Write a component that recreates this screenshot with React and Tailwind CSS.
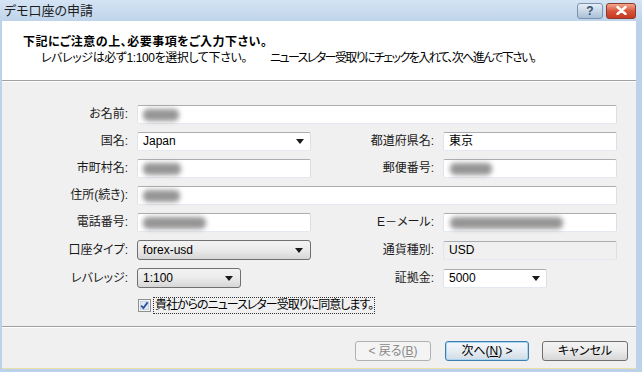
import clsx from "clsx";

const font = "font-['Liberation_Sans','Noto_Sans_CJK_JP',sans-serif] [font-feature-settings:'palt']";

function Blob({ className }) {
  return <div className={clsx("h-[12px] rounded-[5px] bg-[#8a8a8a] blur-[2.5px] opacity-90", className)} />;
}

function Arrow() {
  return (
    <svg width="8" height="5" viewBox="0 0 8 5" className="shrink-0">
      <path d="M0 0h8L4 5z" fill="#1a1a1a" />
    </svg>
  );
}

function TextBox({ className, muted, children }) {
  return (
    <div
      className={clsx(
        "h-[19px] flex items-center pl-[5px] pr-[6px] rounded-[2px] border border-[#abadb3] border-r-[#dbdfe6] border-b-[#e3e9ef] border-l-[#e2e3ea]",
        muted ? "bg-[#f0f0f0]" : "bg-white",
        className
      )}
    >
      {children}
    </div>
  );
}

function WhiteSelect({ className, value }) {
  return (
    <TextBox className={clsx("justify-between", className)}>
      <span>{value}</span>
      <Arrow />
    </TextBox>
  );
}

function GraySelect({ className, value }) {
  return (
    <div
      className={clsx(
        "h-[20px] flex items-center justify-between pl-[5px] pr-[7px] rounded-[3px] border border-[#707070]",
        "bg-gradient-to-b from-[#f3f3f3] via-[#ebebeb] to-[#d6d6d6]",
        className
      )}
    >
      <span>{value}</span>
      <Arrow />
    </div>
  );
}

function Label({ children, className }) {
  return <div className={clsx("text-right pr-[3px] text-[#1a1a1a] shrink-0", className)}>{children}</div>;
}

export default function App() {
  return (
    <div className={clsx("w-[642px] h-[372px] flex flex-col bg-[#bcd2ea] text-[12px] leading-[15px] text-black overflow-hidden", font)}>
      {/* Title bar */}
      <div className="h-[21px] flex items-center bg-gradient-to-b from-[#d5e4f4] to-[#bfd4eb] pl-[4px] pr-[6px]">
        <span className="text-[13px] text-[#1e1e1e]">デモ口座の申請</span>
        <div className="ml-auto flex items-center gap-[3px]">
          <div className="w-[26px] h-[16px] rounded-[3px] border border-[#7d93ad] bg-gradient-to-b from-[#e6eef7] via-[#c9d7e6] to-[#aabfd6] flex items-center justify-center text-[12px] font-bold text-[#34506f] leading-none">
            ?
          </div>
          <div className="w-[30px] h-[16px] rounded-[3px] border border-[#8a3a2e] bg-gradient-to-b from-[#f0a88e] via-[#d8553a] to-[#c7381f] flex items-center justify-center">
            <svg width="11" height="9" viewBox="0 0 11 9">
              <path d="M1.5 1l8 7M9.5 1l-8 7" stroke="#fff" strokeWidth="2.4" strokeLinecap="round" />
            </svg>
          </div>
        </div>
      </div>

      {/* Window body */}
      <div className="flex-1 flex flex-col ml-[2px] mr-[6px] mb-[3px] bg-[#f0f0f0] border-b border-[#e8e0a8]">
        {/* Header */}
        <div className="h-[60px] bg-white border-b border-[#a0a0a0] pl-[21px] pt-[13px]">
          <div className="font-bold text-[12px] leading-[16px] tracking-[0.5px]">下記にご注意の上、必要事項をご入力下さい。</div>
          <div className="flex pl-[18px] leading-[16px]">
            <span className="w-[229px] shrink-0 tracking-[-0.4px]">レバレッジは必ず1:100を選択して下さい。</span>
            <span className="shrink-0 tracking-[-1.6px]">ニュースレター受取りにチェックを入れて、次へ進んで下さい。</span>
          </div>
        </div>

        {/* Form */}
        <div className="flex-1 border-t border-white pt-[23px] flex flex-col gap-[8px]">
          <div className="flex items-center">
            <Label className="w-[129px]">お名前:</Label>
            <TextBox className="ml-[6px] w-[480px]">
              <Blob className="w-[36px]" />
            </TextBox>
          </div>

          <div className="flex items-center">
            <Label className="w-[129px]">国名:</Label>
            <WhiteSelect className="ml-[6px] w-[174px]" value="Japan" />
            <Label className="w-[126px]">都道府県名:</Label>
            <TextBox className="ml-[6px] w-[174px]">
              <span>東京</span>
            </TextBox>
          </div>

          <div className="flex items-center">
            <Label className="w-[129px]">市町村名:</Label>
            <TextBox className="ml-[6px] w-[174px]">
              <Blob className="w-[38px]" />
            </TextBox>
            <Label className="w-[126px]">郵便番号:</Label>
            <TextBox className="ml-[6px] w-[174px]">
              <Blob className="w-[42px] ml-[1px]" />
            </TextBox>
          </div>

          <div className="flex items-center">
            <Label className="w-[129px]">住所(続き):</Label>
            <TextBox className="ml-[6px] w-[480px]">
              <Blob className="w-[37px]" />
            </TextBox>
          </div>

          <div className="flex items-center">
            <Label className="w-[129px]">電話番号:</Label>
            <TextBox className="ml-[6px] w-[174px]">
              <Blob className="w-[63px]" />
            </TextBox>
            <Label className="w-[126px]">E－メール:</Label>
            <TextBox className="ml-[6px] w-[174px]">
              <Blob className="w-[113px] ml-[1px]" />
            </TextBox>
          </div>

          <div className="flex items-center">
            <Label className="w-[129px]">口座タイプ:</Label>
            <GraySelect className="ml-[6px] w-[174px]" value="forex-usd" />
            <Label className="w-[126px]">通貨種別:</Label>
            <TextBox muted className="ml-[6px] w-[174px]">
              <span>USD</span>
            </TextBox>
          </div>

          <div className="flex items-center">
            <Label className="w-[129px]">レバレッジ:</Label>
            <GraySelect className="ml-[6px] w-[104px]" value="1:100" />
            <Label className="w-[196px]">証拠金:</Label>
            <WhiteSelect className="ml-[6px] w-[104px]" value="5000" />
          </div>

          <div className="flex items-center pl-[136px] h-[18px]">
            <svg width="13" height="13" viewBox="0 0 13 13" className="shrink-0">
              <rect x="0.5" y="0.5" width="12" height="12" fill="#f4f4f4" stroke="#8e8f8f" />
              <rect x="2.5" y="2.5" width="8" height="8" fill="#dfe9f5" stroke="#c6d3e2" />
              <path d="M3.2 6.6l2.2 2.4 4.2-5.6" fill="none" stroke="#2e4f9c" strokeWidth="1.8" />
            </svg>
            <span className="ml-[2px] px-[1px] border border-dotted border-[#333] leading-[15px] tracking-[-1px]">
              貴社からのニュースレター受取りに同意します。
            </span>
          </div>
        </div>

        {/* Footer */}
        <div className="h-[42px] border-t border-[#a0a0a0] flex flex-col">
          <div className="flex-1 border-t border-white flex items-start justify-end pt-[13px] pr-[8px] gap-[14px]">
            <div className="h-[20px] w-[76px] rounded-[3px] border border-[#adb2b5] bg-[#f4f4f4] text-[#8a8a8a] flex items-center justify-center">
              &lt; 戻る(<span className="underline">B</span>)
            </div>
            <div className="h-[20px] w-[84px] rounded-[3px] border border-[#3c7fb1] bg-gradient-to-b from-[#f4f8fb] via-[#e6edf3] to-[#d2dbe4] flex items-center justify-center shadow-[inset_0_0_0_1px_#a9d7f3] -mr-[1px]">
              次へ(<span className="underline">N</span>) &gt;
            </div>
            <div className="h-[20px] w-[86px] rounded-[3px] border border-[#707070] bg-gradient-to-b from-[#f3f3f3] via-[#ebebeb] to-[#d6d6d6] flex items-center justify-center">
              キャンセル
            </div>
          </div>
        </div>
      </div>
    </div>
  );
}
